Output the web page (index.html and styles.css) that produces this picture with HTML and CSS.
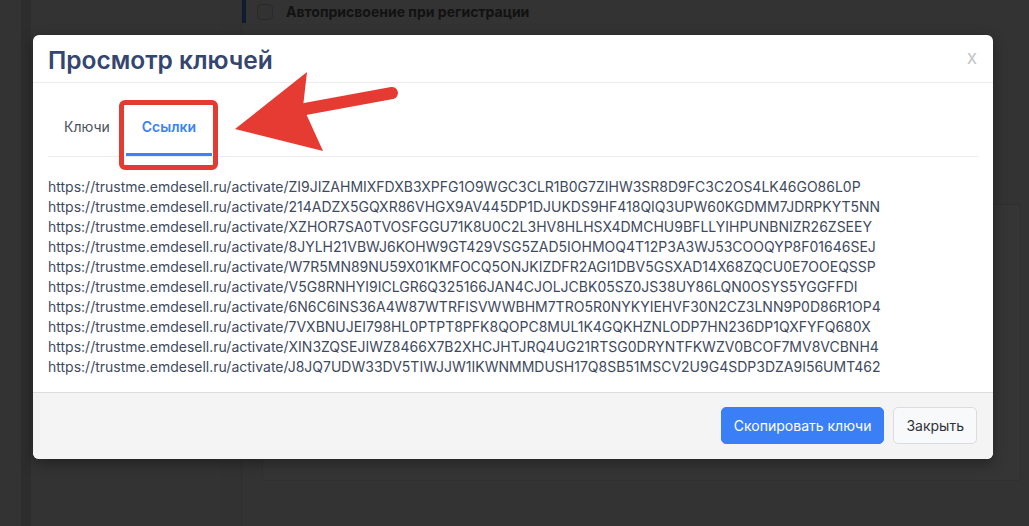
FILE: index.html
```html
<!DOCTYPE html>
<html lang="ru">
<head>
<meta charset="utf-8">
<title>Просмотр ключей</title>
<link rel="stylesheet" href="styles.css">
</head>
<body>
<div class="page">
  <div class="rail-a"></div>
  <div class="rail-b"></div>
  <div class="side"></div>
  <div class="side2"></div>
  <div class="main">
    <div class="setting">
      <span class="check"></span>
      <span class="setting-label">Автоприсвоение при регистрации</span>
    </div>
    <div class="card"></div>
  </div>
</div>

<div class="overlay">
  <div class="modal">
    <div class="modal-header">
      <h2 class="modal-title">Просмотр ключей</h2>
      <span class="close">x</span>
    </div>
    <div class="modal-body">
      <div class="tabs">
        <span class="tab">Ключи</span>
        <span class="tab active">Ссылки</span>
      </div>
      <div class="links">
        <div>https://trustme.emdesell.ru/activate/ZI9JIZAHMIXFDXB3XPFG1O9WGC3CLR1B0G7ZIHW3SR8D9FC3C2OS4LK46GO86L0P</div>
        <div>https://trustme.emdesell.ru/activate/214ADZX5GQXR86VHGX9AV445DP1DJUKDS9HF418QIQ3UPW60KGDMM7JDRPKYT5NN</div>
        <div>https://trustme.emdesell.ru/activate/XZHOR7SA0TVOSFGGU71K8U0C2L3HV8HLHSX4DMCHU9BFLLYIHPUNBNIZR26ZSEEY</div>
        <div>https://trustme.emdesell.ru/activate/8JYLH21VBWJ6KOHW9GT429VSG5ZAD5IOHMOQ4T12P3A3WJ53COOQYP8F01646SEJ</div>
        <div>https://trustme.emdesell.ru/activate/W7R5MN89NU59X01KMFOCQ5ONJKIZDFR2AGI1DBV5GSXAD14X68ZQCU0E7OOEQSSP</div>
        <div>https://trustme.emdesell.ru/activate/V5G8RNHYI9ICLGR6Q325166JAN4CJOLJCBK05SZ0JS38UY86LQN0OSYS5YGGFFDI</div>
        <div>https://trustme.emdesell.ru/activate/6N6C6INS36A4W87WTRFISVWWBHM7TRO5R0NYKYIEHVF30N2CZ3LNN9P0D86R1OP4</div>
        <div>https://trustme.emdesell.ru/activate/7VXBNUJEI798HL0PTPT8PFK8QOPC8MUL1K4GQKHZNLODP7HN236DP1QXFYFQ680X</div>
        <div>https://trustme.emdesell.ru/activate/XIN3ZQSEJIWZ8466X7B2XHCJHTJRQ4UG21RTSG0DRYNTFKWZV0BCOF7MV8VCBNH4</div>
        <div>https://trustme.emdesell.ru/activate/J8JQ7UDW33DV5TIWJJW1IKWNMMDUSH17Q8SB51MSCV2U9G4SDP3DZA9I56UMT462</div>
      </div>
    </div>
    <div class="modal-footer">
      <button class="btn btn-primary">Скопировать ключи</button>
      <button class="btn btn-light">Закрыть</button>
    </div>
  </div>

  <div class="mark-box"></div>
  <svg class="mark-arrow" width="180" height="110" viewBox="0 0 180 110" xmlns="http://www.w3.org/2000/svg">
    <line x1="70" y1="44" x2="157" y2="28" stroke="#e53b32" stroke-width="12" stroke-linecap="round"/>
    <polygon points="0,64 72,7 68,42 88,86" fill="#e53b32"/>
  </svg>
</div>
</body>
</html>
```

FILE: styles.css
```css
* { box-sizing: border-box; }

html, body {
  margin: 0;
  padding: 0;
  height: 100%;
  overflow: hidden;
}

body {
  background: #333333;
  font-family: Inter, "Noto Sans", "Liberation Sans", sans-serif;
  position: relative;
}

.page {
  display: flex;
  height: 526px;
}

.rail-a { width: 21px; background: #333333; }
.rail-b { width: 10px; background: #2d2d2d; }
.side { width: 190px; background: #333333; }
.side2 { width: 21px; background: #323232; border-right: 1px solid #2e2e2e; }

.main {
  flex: 1;
  display: flex;
  flex-direction: column;
  background: #333333;
}

.setting {
  display: flex;
  align-items: center;
  gap: 13px;
  height: 23px;
  border-left: 4px solid #0f1c30;
  padding-left: 11px;
  width: 320px;
}

.check {
  width: 16px;
  height: 16px;
  border: 1px solid #2a2a2a;
  border-radius: 4px;
  background: #323232;
}

.setting-label {
  font-size: 14px;
  font-weight: 700;
  color: #121212;
}

.card {
  margin: 181px 8px 0 20px;
  height: 277px;
  background: #353535;
  border: 1px solid #2f2f2f;
  border-radius: 4px;
}

.overlay {
  position: absolute;
  inset: 0;
}

.modal {
  position: absolute;
  left: 33px;
  top: 35px;
  width: 960px;
  background: #ffffff;
  border-radius: 6px;
  box-shadow: 0 4px 14px rgba(0, 0, 0, 0.35);
  overflow: hidden;
}

.modal-header {
  height: 48px;
  display: flex;
  align-items: center;
  justify-content: space-between;
  padding: 0 16px 0 15px;
  border-bottom: 1px solid #ececf0;
}

.modal-title {
  margin: 0;
  font-size: 24.5px;
  font-weight: 600;
  color: #34466f;
  line-height: 30px;
  padding-top: 2px;
}

.close {
  font-size: 19px;
  color: #c6c6c6;
  line-height: 1;
  padding-bottom: 3px;
}

.modal-body {
  padding: 15px;
}

.tabs {
  display: flex;
  border-bottom: 1px solid #ebebf0;
}

.tab {
  padding: 19px 16px 16px;
  border-bottom: 3px solid transparent;
  font-size: 14px;
  line-height: 20px;
  color: #4a4f5c;
}

.tab.active {
  color: #3b82f6;
  font-weight: 600;
  border-bottom-color: #3b82f6;
}

.links {
  padding-top: 20px;
  font-size: 14px;
  line-height: 20px;
  color: #3e4a5e;
}

.modal-footer {
  display: flex;
  justify-content: flex-end;
  gap: 9px;
  padding: 14px 16px 15px;
  background: #f4f4f4;
  border-top: 1px solid #dcdcdc;
}

.btn {
  font-family: Inter, "Noto Sans", "Liberation Sans", sans-serif;
  font-size: 14px;
  height: 37px;
  border-radius: 5px;
  padding: 0 12px;
  white-space: nowrap;
  cursor: pointer;
}

.btn-primary {
  background: #3a7ff6;
  border: 1px solid #3a7ff6;
  color: #ffffff;
}

.btn-light {
  background: #f8f9fb;
  border: 1px solid #dcdcdf;
  color: #2f3339;
}

.mark-box {
  position: absolute;
  left: 119px;
  top: 100px;
  width: 99px;
  height: 70px;
  border: 5px solid #e23b31;
  border-radius: 6px;
}

.mark-arrow {
  position: absolute;
  left: 235px;
  top: 65px;
}
```
